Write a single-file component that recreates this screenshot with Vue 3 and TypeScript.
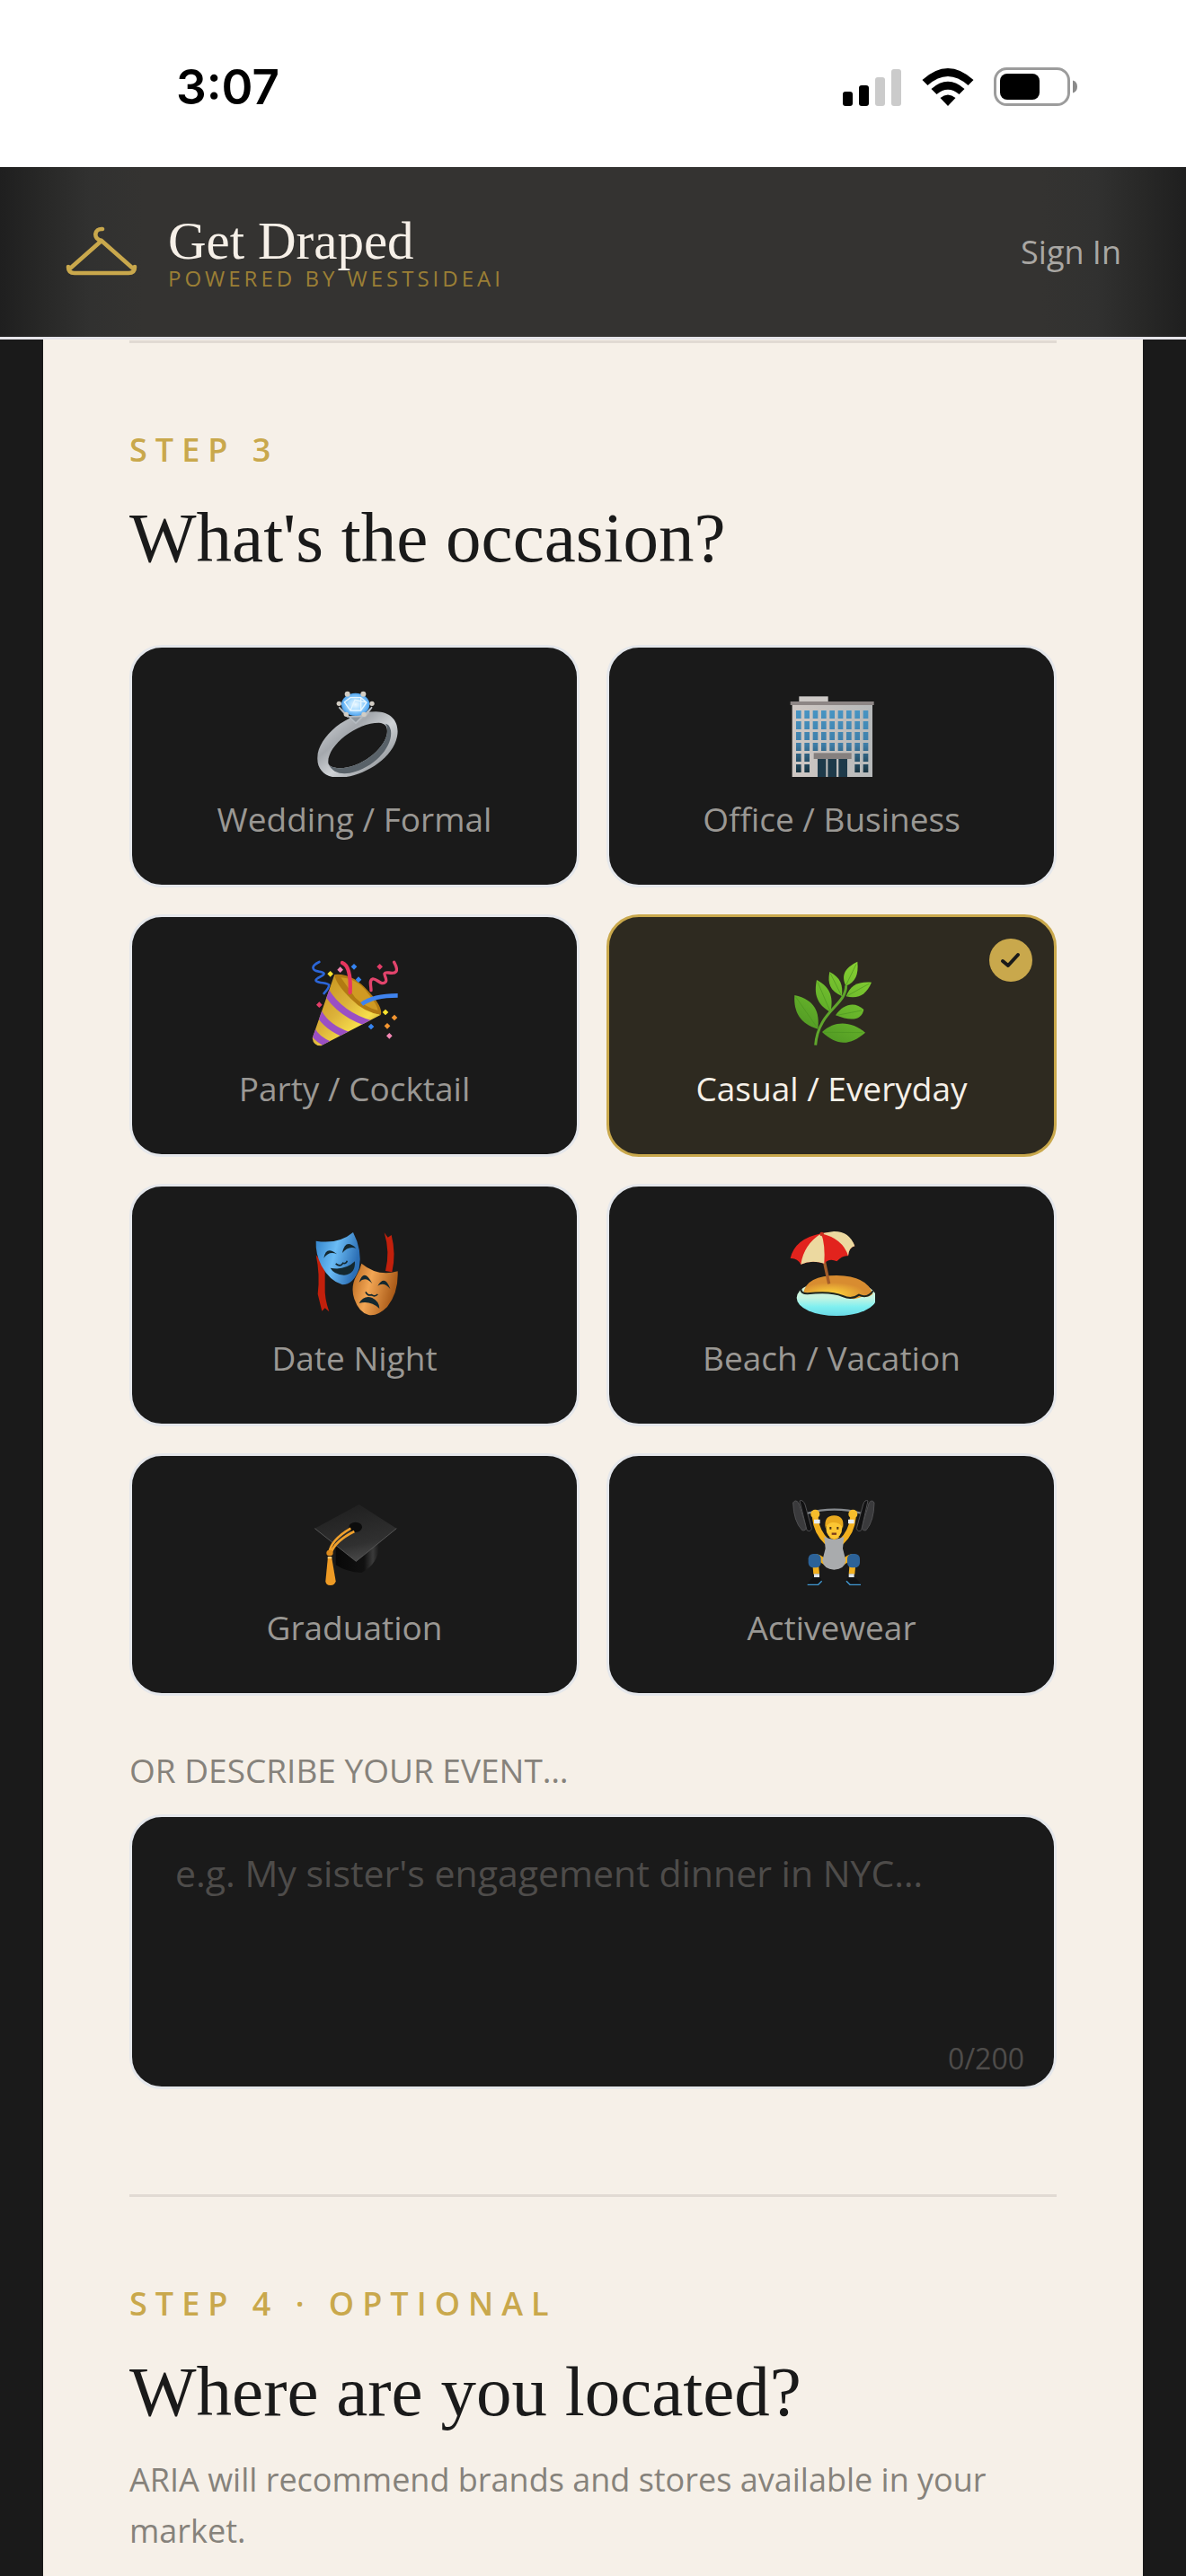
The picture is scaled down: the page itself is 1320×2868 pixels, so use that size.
<script setup lang="ts">
import { computed, ref } from 'vue'

type Icon = 'ring' | 'office' | 'party' | 'herb' | 'masks' | 'beach' | 'cap' | 'lifter'

interface Occasion {
  icon: Icon
  label: string
}

const occasions: Occasion[] = [
  { icon: 'ring', label: 'Wedding / Formal' },
  { icon: 'office', label: 'Office / Business' },
  { icon: 'party', label: 'Party / Cocktail' },
  { icon: 'herb', label: 'Casual / Everyday' },
  { icon: 'masks', label: 'Date Night' },
  { icon: 'beach', label: 'Beach / Vacation' },
  { icon: 'cap', label: 'Graduation' },
  { icon: 'lifter', label: 'Activewear' },
]

const maxLength = 200
const selected = ref<Icon>('herb')
const description = ref('')
const counter = computed(() => `${description.value.length}/${maxLength}`)

// Office facade: nine columns of windows, the two lowest rows leave room for the entrance.
const windows = Array.from({ length: 6 }, (_, row) =>
  Array.from({ length: 9 }, (_, col) => ({ row, col })),
)
  .flat()
  .filter(({ row, col }) => row < 4 || col < 2 || col > 6)
</script>

<template>
  <div class="page">
    <div class="status">
      <span class="time">3:07</span>
      <div class="indicators">
        <svg width="66" height="42" viewBox="0 0 66 42" aria-hidden="true">
          <rect x="0" y="26" width="11" height="16" rx="3" />
          <rect x="18" y="19" width="11" height="23" rx="3" />
          <rect x="36" y="10" width="11" height="32" rx="3" fill="#cbcbcb" />
          <rect x="54" y="1" width="11" height="41" rx="3" fill="#cbcbcb" />
        </svg>
        <svg width="58" height="42" viewBox="0 0 58 42" aria-hidden="true">
          <path d="M0.500 13 Q29 -13 57.500 13 L51.500 19 Q29 -1 6.500 19 Z" />
          <path d="M10.500 23 Q29 6.500 47.500 23 L41.500 29 Q29 18.500 16.500 29 Z" />
          <path d="M20.500 33 Q29 26 37.500 33 L29 42 Z" />
        </svg>
        <svg width="94" height="44" viewBox="0 0 94 44" aria-hidden="true">
          <rect x="1.500" y="1.500" width="82" height="40" rx="13" fill="none" stroke="#9c9c9c" stroke-width="3" />
          <rect x="7" y="7" width="44" height="29" rx="8" />
          <path d="M88 14.500 q5 1.500 5 7 t-5 7 z" fill="#8a8a8a" />
        </svg>
      </div>
    </div>

    <header class="header">
      <a class="brand" href="#">
        <svg class="hanger" width="82" height="60" viewBox="0 0 82 60" aria-hidden="true">
          <path
            d="M42 4 C33 3 31 15 41 17 L75 47 M41 17 L7 47 M4 46 Q4 53 11 53 H71 Q78 53 78 46"
            fill="none"
            stroke="#c9a84c"
            stroke-width="4.600"
            stroke-linecap="round"
            stroke-linejoin="round"
          />
        </svg>
        <span class="brand-text">
          <span class="brand-name">Get Draped</span>
          <span class="brand-tag">POWERED BY WESTSIDEAI</span>
        </span>
      </a>
      <a class="sign-in" href="#">Sign In</a>
    </header>

    <main class="sheet">
      <section class="step">
        <p class="eyebrow">STEP 3</p>
        <h2 class="title">What's the occasion?</h2>

        <div class="grid">
          <button
            v-for="item in occasions"
            :key="item.icon"
            type="button"
            class="option"
            :class="{ active: selected === item.icon }"
            :aria-pressed="selected === item.icon"
            @click="selected = item.icon"
          >
            <span v-if="selected === item.icon" class="check">
              <svg width="24" height="20" viewBox="0 0 24 20" aria-hidden="true">
                <path
                  d="M3 11 L9 16 L20 4"
                  fill="none"
                  stroke="#1a1a1a"
                  stroke-width="4"
                  stroke-linecap="round"
                  stroke-linejoin="round"
                />
              </svg>
            </span>

            <svg v-if="item.icon === 'ring'" class="icon" viewBox="621 177 288 288" aria-hidden="true">
              <defs>
                <linearGradient id="band" x1="0" y1="0" x2="1" y2="1">
                  <stop offset="0" stop-color="#d9dce0" />
                  <stop offset="0.350" stop-color="#a4a8ad" />
                  <stop offset="0.550" stop-color="#d0d3d6" />
                  <stop offset="1" stop-color="#6d7277" />
                </linearGradient>
                <radialGradient id="gem">
                  <stop offset="0" stop-color="#eef9ff" />
                  <stop offset="0.500" stop-color="#a9dbff" />
                  <stop offset="1" stop-color="#4da3ef" />
                </radialGradient>
              </defs>
              <path
                fill="url(#band)"
                fill-rule="evenodd"
                d="M640 400 C642 330 740 248 835 247 C890 248 915 285 906 330 C890 410 780 470 705 467 C665 465 638 440 640 400 Z M676 418 C672 360 770 284 845 284 C870 286 875 300 872 322 C862 375 780 438 712 436 C690 434 678 430 676 418 Z"
              />
              <path d="M872 322 C862 375 780 438 712 436 C690 434 678 430 676 418 C690 460 735 458 765 448 C840 425 892 360 885 310 C882 295 876 288 866 287 C874 295 874 308 872 322 Z" fill="#596269" />
              <path d="M712 232 L768 285 L822 232 L800 262 L740 264 Z" fill="#8d949b" stroke="#b6bcc2" stroke-width="5" />
              <ellipse cx="767" cy="223" rx="47" ry="38" fill="url(#gem)" />
              <path d="M730 215 L750 200 L785 200 L804 216 L785 243 L750 243 Z M730 215 L750 243 M804 216 L765 208 L750 243 M785 200 L785 243" fill="none" stroke="#e6f6ff" stroke-width="4" />
              <g fill="#d2cdc4">
                <circle cx="740" cy="188" r="9" />
                <circle cx="793" cy="188" r="9" />
                <circle cx="712" cy="220" r="8" />
                <circle cx="822" cy="220" r="8" />
                <circle cx="736" cy="256" r="8" />
                <circle cx="795" cy="256" r="8" />
              </g>
            </svg>

            <svg v-else-if="item.icon === 'office'" class="icon" viewBox="627 177 288 288" aria-hidden="true">
              <defs>
                <linearGradient id="wall" x1="0" y1="0" x2="1" y2="0">
                  <stop offset="0" stop-color="#cfc8c4" />
                  <stop offset="0.500" stop-color="#c3c0be" />
                  <stop offset="1" stop-color="#b6b9ba" />
                </linearGradient>
                <linearGradient id="glass" gradientUnits="userSpaceOnUse" x1="0" y1="240" x2="0" y2="450">
                  <stop offset="0" stop-color="#4795c4" />
                  <stop offset="0.550" stop-color="#3f7ea8" />
                  <stop offset="1" stop-color="#17323f" />
                </linearGradient>
              </defs>
              <rect x="661" y="196" width="97" height="18" fill="#cdc9c6" />
              <rect x="638" y="222" width="268" height="243" fill="url(#wall)" />
              <rect x="632" y="213" width="279" height="12" fill="#8d8685" />
              <rect
                v-for="w in windows"
                :key="`${w.row}-${w.col}`"
                :x="651 + w.col * 28"
                :y="243 + w.row * 36"
                width="17"
                height="27"
                fill="url(#glass)"
              />
              <rect x="710" y="385" width="126" height="20" fill="#85807f" />
              <path d="M723 405 h28 v60 h-28 z M757 405 h29 v60 h-29 z M793 405 h29 v60 h-29 z" fill="#1e3a4a" />
            </svg>

            <svg v-else-if="item.icon === 'party'" class="icon" viewBox="625 180 288 288" aria-hidden="true">
              <defs>
                <linearGradient id="cone" x1="0" y1="0" x2="1" y2="1">
                  <stop offset="0" stop-color="#c08a14" />
                  <stop offset="0.450" stop-color="#dcb23a" />
                  <stop offset="0.700" stop-color="#f7df4c" />
                  <stop offset="1" stop-color="#a9760d" />
                </linearGradient>
                <clipPath id="coneShape">
                  <path d="M701 228 L627 440 Q630 466 656 466 L856 362 Q790 350 701 228 Z" />
                </clipPath>
              </defs>
              <path d="M701 228 L627 440 Q630 466 656 466 L856 362 Q790 350 701 228 Z" fill="url(#cone)" />
              <g clip-path="url(#coneShape)" fill="none" stroke="#9a4fc4" stroke-width="23">
                <path d="M670 280 Q720 365 830 395" />
                <path d="M648 355 Q675 405 745 430" />
                <path d="M625 412 Q640 445 690 465" />
              </g>
              <path d="M701 228 Q760 222 815 285 Q862 335 856 362 Q800 355 755 308 Q705 260 701 228 Z" fill="#b27a12" />
              <path d="M722 238 Q775 240 812 290 Q844 328 846 348 Q800 335 770 305 Z" fill="#d09a22" />
              <g fill="none" stroke-linecap="round">
                <path d="M727 189 Q757 200 753 288" stroke="#e8365f" stroke-width="13" />
                <path d="M792 327 Q830 298 912 298" stroke="#3f83ee" stroke-width="14" stroke-linecap="butt" />
                <path d="M650 186 C620 200 626 214 648 218 C680 222 662 232 645 240 C620 256 676 254 682 262 C685 270 674 282 666 291" stroke="#2c66d8" stroke-width="8" />
                <path d="M900 187 C918 220 905 226 882 222 C852 218 880 240 872 252 C858 268 842 240 828 243 C816 246 823 265 823 281" stroke="#e2446c" stroke-width="10" />
              </g>
              <path d="M687 216 l10 10 -10 10 -10 -10 z M871 344 l10 10 -10 10 -10 -10 z" fill="#f7e22e" />
              <path d="M720 202 l10 10 -10 10 -10 -10 z M884 423 l10 10 -10 10 -10 -10 z" fill="#f487b4" />
              <path d="M766 192 l10 10 -10 10 -10 -10 z M781 235 l10 10 -10 10 -10 -10 z M823 392 l10 10 -10 10 -10 -10 z" fill="#3584f2" />
              <path d="M852 192 l10 10 -10 10 -10 -10 z M650 319 l10 10 -10 10 -10 -10 z" fill="#e23d68" />
              <path d="M901 362 l10 10 -10 10 -10 -10 z M877 390 l10 10 -10 10 -10 -10 z" fill="#f39530" />
            </svg>

            <svg v-else-if="item.icon === 'herb'" class="icon" viewBox="627 177 288 288" aria-hidden="true">
              <defs>
                <linearGradient id="leaf" gradientUnits="userSpaceOnUse" x1="850" y1="180" x2="700" y2="460">
                  <stop offset="0" stop-color="#86cf32" />
                  <stop offset="0.500" stop-color="#68b52b" />
                  <stop offset="1" stop-color="#4a9122" />
                </linearGradient>
              </defs>
              <path d="M818 262 C818 330 725 345 716 461" fill="none" stroke="#5fa52c" stroke-width="9" />
              <g fill="url(#leaf)">
                <path d="M856 182 C815 202 800 225 817 263 C850 250 860 225 856 182 Z" />
                <path d="M903 251 C855 248 832 262 818 298 C860 308 885 292 903 251 Z" />
                <path d="M763 216 C755 255 765 280 804 297 C808 260 800 235 763 216 Z" />
                <path d="M720 243 C710 290 720 325 766 351 C775 305 770 270 720 243 Z" />
                <path d="M783 361 C810 320 850 315 877 342 C870 378 835 382 783 361 Z" />
                <path d="M646 294 C642 350 665 390 724 407 C730 350 715 310 646 294 Z" />
                <path d="M738 417 C780 378 835 380 882 419 C830 465 785 462 738 417 Z" />
              </g>
              <path d="M852 190 L818 260 M896 255 L822 296 M766 222 L802 294 M723 250 L764 346 M870 345 L788 361 M650 300 L720 400 M874 419 L744 418" fill="none" stroke="#4c9420" stroke-width="2" />
            </svg>

            <svg v-else-if="item.icon === 'masks'" class="icon" viewBox="0 0 288 288" aria-hidden="true">
              <defs>
                <linearGradient id="joy" x1="0" y1="0" x2="1" y2="0.300">
                  <stop offset="0" stop-color="#2f80c8" />
                  <stop offset="0.500" stop-color="#6bbcf5" />
                  <stop offset="1" stop-color="#2c6fb5" />
                </linearGradient>
                <linearGradient id="sorrow" x1="0" y1="0" x2="1" y2="0.300">
                  <stop offset="0" stop-color="#b5641c" />
                  <stop offset="0.450" stop-color="#f2a654" />
                  <stop offset="1" stop-color="#a95a18" />
                </linearGradient>
              </defs>
              <path d="M14 85 Q28 150 20 215 L34 272 L44 262 L58 274 Q42 230 44 190 L44 120 Z" fill="#c2200c" />
              <path d="M242 10 L254 26 L266 18 Q282 80 268 142 L246 138 Q262 75 242 10 Z" fill="#c2200c" />
              <path d="M14 38 Q90 50 138 9 Q170 70 158 130 Q140 184 102 184 Q60 172 32 120 Q12 80 14 38 Z" fill="url(#joy)" />
              <path d="M166 113 Q220 158 287 139 Q290 210 252 258 Q220 290 190 285 Q158 278 142 232 Q128 190 150 152 Q162 132 166 113 Z" fill="url(#sorrow)" />
              <g fill="#14282f">
                <path d="M40 95 Q48 52 84 82 Q58 70 40 95 Z M102 78 Q112 28 148 62 Q120 54 102 78 Z" />
                <path d="M62 128 Q110 138 144 106 Q146 150 108 152 Q74 150 62 128 Z" />
                <path d="M158 176 Q174 126 202 180 Q178 154 158 176 Z M220 188 Q244 148 262 198 Q240 172 220 188 Z" />
                <path d="M158 246 Q174 218 202 228 Q226 240 226 264 Q196 236 158 246 Z" />
              </g>
              <path d="M80 114 Q96 126 104 112 Q114 116 118 104 M180 208 Q186 222 200 218 Q210 226 220 216" fill="none" stroke="#14282f" stroke-width="5" />
            </svg>

            <svg v-else-if="item.icon === 'beach'" class="icon" viewBox="0 0 288 288" aria-hidden="true">
              <defs>
                <linearGradient id="sea" x1="0" y1="0" x2="0" y2="1">
                  <stop offset="0" stop-color="#e6f5d0" />
                  <stop offset="0.500" stop-color="#c4f4e2" />
                  <stop offset="0.750" stop-color="#7feff0" />
                  <stop offset="1" stop-color="#6ad9e6" />
                </linearGradient>
                <radialGradient id="sand" cx="0.400" cy="0.800">
                  <stop offset="0" stop-color="#ffd83c" />
                  <stop offset="1" stop-color="#d88c30" />
                </radialGradient>
              </defs>
              <ellipse cx="159" cy="228" rx="133" ry="60" fill="url(#sea)" />
              <path d="M48 212 Q60 153 160 153 Q262 155 280 215 Q262 230 250 220 Q220 240 190 225 Q130 205 48 212 Z" fill="url(#sand)" />
              <path d="M40 198 Q40 214 62 214 Q140 205 180 222 Q210 236 234 218 Q262 232 282 204" fill="none" stroke="#1d2420" stroke-width="6" />
              <path d="M118 105 L134 181" stroke="#a35c29" stroke-width="10" />
              <path d="M5 96 Q20 30 108 13 Q195 -5 220 55 Q200 60 198 88 Q180 84 160 106 Q135 94 118 113 Q75 100 40 116 Q28 94 5 96 Z" fill="#e2231d" />
              <path d="M108 13 Q50 50 40 116 Q75 100 118 113 Q122 50 108 13 Z M108 13 Q180 30 198 88 Q200 60 220 55 Q202 5 150 6 Z" fill="#ecd9a0" />
              <circle cx="110" cy="15" r="7" fill="#c9301f" />
            </svg>

            <svg v-else-if="item.icon === 'cap'" class="icon" viewBox="0 0 288 288" aria-hidden="true">
              <defs>
                <linearGradient id="board" x1="0.300" y1="0" x2="0.600" y2="1">
                  <stop offset="0" stop-color="#1f1f1f" />
                  <stop offset="0.700" stop-color="#303030" />
                  <stop offset="1" stop-color="#4b4b4b" />
                </linearGradient>
                <linearGradient id="crown" x1="0" y1="0" x2="1" y2="0">
                  <stop offset="0" stop-color="#080808" />
                  <stop offset="0.650" stop-color="#111111" />
                  <stop offset="0.850" stop-color="#3b3b3b" />
                  <stop offset="1" stop-color="#161616" />
                </linearGradient>
              </defs>
              <path d="M80 160 L226 150 Q224 216 166 246 Q116 244 80 220 Z" fill="url(#crown)" />
              <path d="M10 98 L158 18 L283 98 L148 208 Z" fill="url(#board)" />
              <path d="M10 98 L148 208 L283 98" fill="none" stroke="#555555" stroke-width="3" />
              <ellipse cx="146" cy="94" rx="22" ry="17" fill="#0c0c0c" />
              <path d="M130 98 Q64 136 58 180 M142 108 Q78 140 64 180" fill="none" stroke="#f0a02c" stroke-width="8" />
              <ellipse cx="60" cy="180" rx="11" ry="10" fill="#dd8b1d" />
              <path d="M54 192 h12 L80 274 Q78 288 62 288 Q46 288 46 274 Z" fill="#ee9b25" />
              <path d="M53 196 h14" stroke="#f7d489" stroke-width="5" />
            </svg>

            <svg v-else class="icon" viewBox="0 0 288 288" aria-hidden="true">
              <path d="M60 48 Q152 22 244 48" fill="none" stroke="#868a8e" stroke-width="7" />
              <g stroke="#505052" stroke-width="3">
                <path d="M14 12 Q22 0 32 12 L58 92 Q58 108 44 104 Q16 74 14 12 Z" fill="#3a3a3c" />
                <path d="M36 6 Q46 0 54 18 L76 98 Q72 112 60 104 Z" fill="#111112" />
                <path d="M285 12 Q278 0 268 12 L244 92 Q244 108 258 104 Q284 74 285 12 Z" fill="#3a3a3c" />
                <path d="M264 6 Q254 0 248 18 L226 98 Q230 112 242 104 Z" fill="#111112" />
              </g>
              <g fill="none" stroke="#f2b01e" stroke-width="20" stroke-linejoin="round">
                <path d="M88 62 Q92 110 128 144 M214 62 Q210 110 174 144" />
                <path d="M128 215 Q80 178 88 205 L92 250 M174 215 Q222 178 214 205 L210 250" />
              </g>
              <path d="M84 75 h20 M198 75 h20" stroke="#e9eef2" stroke-width="14" />
              <circle cx="88" cy="50" r="15" fill="#f6bd2c" />
              <circle cx="214" cy="50" r="15" fill="#f6bd2c" />
              <path d="M118 126 Q150 142 184 126 L180 165 L190 205 Q186 235 151 236 Q116 235 112 205 L122 165 Z" fill="#a9abad" />
              <path d="M134 126 Q151 146 170 126 Z" fill="#f2b01e" />
              <ellipse cx="151" cy="96" rx="27" ry="36" fill="#fcc633" />
              <path d="M122 96 Q116 56 151 55 Q188 56 180 98 Q172 76 146 78 Q130 80 122 96 Z" fill="#e9a91e" />
              <path d="M139 93 v8 M163 93 v8" stroke="#4c3215" stroke-width="6" />
              <path d="M143 116 h16" stroke="#7b3d1b" stroke-width="7" />
              <rect x="65" y="183" width="42" height="46" rx="16" fill="#2c6298" />
              <rect x="195" y="183" width="42" height="46" rx="16" fill="#2c6298" />
              <path d="M84 256 h18 M200 256 h18" stroke="#dfe5e8" stroke-width="12" />
              <path d="M62 284 Q76 264 84 262 L104 262 Q116 272 100 284 Z M240 284 Q226 264 218 262 L198 262 Q186 272 202 284 Z" fill="#111214" />
              <path d="M62 286 H98 L110 274 M240 286 H204 L192 274" fill="none" stroke="#4299d2" stroke-width="4" />
            </svg>

            <span class="option-label">{{ item.label }}</span>
          </button>
        </div>

        <label class="field-label" for="event">OR DESCRIBE YOUR EVENT…</label>
        <div class="field">
          <textarea
            id="event"
            v-model="description"
            :maxlength="maxLength"
            placeholder="e.g. My sister's engagement dinner in NYC…"
          ></textarea>
          <span class="counter">{{ counter }}</span>
        </div>
      </section>

      <section class="step">
        <p class="eyebrow">STEP 4 · OPTIONAL</p>
        <h2 class="title">Where are you located?</h2>
        <p class="hint">ARIA will recommend brands and stores available in your market.</p>
      </section>
    </main>
  </div>
</template>

<style>
body {
  margin: 0;
  background: #1a1a1a;
}
</style>

<style scoped>
.page {
  display: flex;
  flex-direction: column;
  min-height: 100vh;
  box-sizing: border-box;
  background: #1a1a1a;
  font-family: 'Open Sans', 'Noto Sans', sans-serif;
  font-size: 36px;
}

.status {
  display: flex;
  align-items: center;
  justify-content: space-between;
  height: 186px;
  padding: 8px 120px 0 196px;
  box-sizing: border-box;
  background: #ffffff;
}

.time {
  font-family: Inter, sans-serif;
  font-size: 53px;
  font-weight: 600;
  line-height: 60px;
  color: #000000;
}

.indicators {
  display: flex;
  align-items: center;
  gap: 22px;
}

.header {
  display: flex;
  align-items: center;
  justify-content: space-between;
  height: 192px;
  padding: 0 72px;
  box-sizing: border-box;
  border-bottom: 3px solid #e5e4e9;
  background: linear-gradient(90deg, #1f1f1f 0, #282827 48px, #313130 100px, #343331 160px, #343331 calc(100% - 160px), #313130 calc(100% - 100px), #282827 calc(100% - 48px), #1f1f1f 100%);
}

.brand {
  display: flex;
  align-items: center;
  gap: 33px;
  color: #f6f0e8;
  text-decoration: none;
}

.brand-text {
  display: flex;
  flex-direction: column;
}

.brand-name {
  font-family: 'Liberation Serif', serif;
  font-size: 59px;
  line-height: 58px;
}

.brand-tag {
  font-size: 24px;
  line-height: 26px;
  letter-spacing: 4px;
  color: #9b7f35;
}

.sign-in {
  color: #a9a7a3;
  text-decoration: none;
}

.sheet {
  flex: 1;
  margin: 0 48px;
  padding: 1px 96px 0;
  background: #f6f0e8;
}

.step {
  padding: 96px 0 117px;
  border-top: 3px solid #e1dad3;
}

.step:last-child {
  padding-bottom: 0;
}

.eyebrow {
  margin: 0 0 30px;
  font-weight: 600;
  line-height: 46px;
  letter-spacing: 9px;
  color: #c9a84c;
}

.title {
  margin: 0;
  font-family: 'Liberation Serif', serif;
  font-size: 79px;
  font-weight: 400;
  line-height: 90px;
  color: #1a1a1a;
}

.grid {
  display: grid;
  grid-template-columns: 1fr 1fr;
  gap: 30px;
  margin-top: 74px;
}

.option {
  position: relative;
  display: flex;
  flex-direction: column;
  align-items: center;
  gap: 20px;
  padding: 48px 24px 46px;
  border: 3px solid #e5e7eb;
  border-radius: 36px;
  background: #1a1a1a;
  color: #9a9894;
  font: inherit;
  font-size: 37px;
  font-weight: 500;
}

.option.active {
  border-color: #c9a84c;
  background: #2e2a20;
  color: #f6f0e8;
}

.icon {
  display: block;
  width: 96px;
  height: 96px;
}

.option-label {
  line-height: 54px;
}

.check {
  position: absolute;
  top: 24px;
  right: 24px;
  display: flex;
  align-items: center;
  justify-content: center;
  width: 48px;
  height: 48px;
  border-radius: 50%;
  background: #c9a84c;
}

.field-label {
  display: block;
  margin: 60px 0 26px;
  font-size: 37px;
  line-height: 46px;
  color: #86827b;
}

.field {
  position: relative;
}

textarea {
  display: block;
  width: 100%;
  height: 306px;
  padding: 31px 48px;
  box-sizing: border-box;
  border: 3px solid #e5e7eb;
  border-radius: 36px;
  resize: none;
  background: #1a1a1a;
  color: #f6f0e8;
  font-family: inherit;
  font-size: 41px;
  line-height: 63px;
}

textarea::placeholder {
  color: #4e4c4a;
  opacity: 1;
}

.counter {
  position: absolute;
  right: 36px;
  bottom: 13px;
  font-size: 32px;
  line-height: 42px;
  color: #4e4c4a;
}

.hint {
  margin: 24px 0 0;
  line-height: 57px;
  color: #86827b;
}
</style>
